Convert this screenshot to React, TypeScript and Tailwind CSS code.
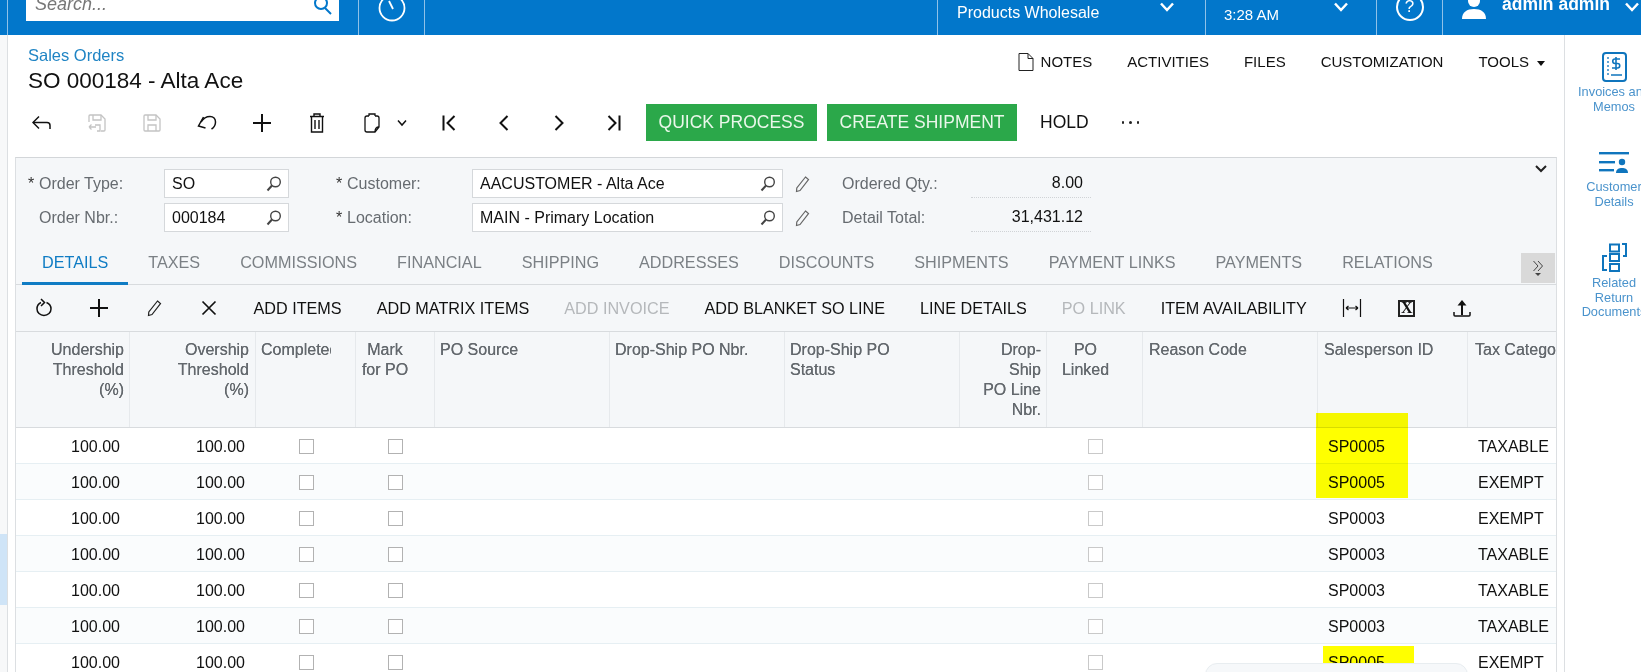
import type { ReactNode } from "react";

// small helper for the line icons
function Ico({ w = 20, h = 20, className = "", sw = 1.5, children }: { w?: number; h?: number; className?: string; sw?: number; children: ReactNode }) {
  return (
    <svg width={w} height={h} viewBox={`0 0 ${w} ${h}`} fill="none" stroke="currentColor" strokeWidth={sw} className={className}>
      {children}
    </svg>
  );
}

const Chevron = ({ className = "" }: { className?: string }) => (
  <Ico w={16} h={10} sw={2.5} className={className}>
    <path d="M2 1.5l6 6.5 6-6.5" />
  </Ico>
);

const Lens = () => (
  <Ico w={18} h={18} sw={1.4} className="text-[#444]">
    <circle cx="10.5" cy="7" r="4.8" />
    <path d="M7 10.5L2.5 15.5" strokeWidth={2} />
  </Ico>
);

const Pencil = ({ className = "" }: { className?: string }) => (
  <Ico w={18} h={18} sw={1.2} className={className}>
    <path d="M12.5 2l3 2.5L7 15.5l-3.5 1 .3-3.6z" />
  </Ico>
);

const IconBtn = ({ children, className = "" }: { children: ReactNode; className?: string }) => (
  <div className={`flex h-full w-[55px] shrink-0 items-center justify-center ${className}`}>{children}</div>
);

const Floppy = ({ arrow }: { arrow?: boolean }) => (
  <Ico w={18} h={18} sw={1.3} className="text-[#c4c4c4]">
    {arrow ? (
      <>
        <path d="M1 8V2a1 1 0 0 1 1-1h11l4 4v11a1 1 0 0 1-1 1h-3" />
        <path d="M5 1v5h8V1M9 17h3v-6H7" />
        <path d="M1 13h7M1 13l2.5-2.5M1 13l2.5 2.5" />
      </>
    ) : (
      <>
        <path d="M2 1h11l4 4v11a1 1 0 0 1-1 1H2a1 1 0 0 1-1-1V2a1 1 0 0 1 1-1z" />
        <path d="M5 1v5h8V1M5 17v-6h8v6" />
      </>
    )}
  </Ico>
);

function PageToolbar() {
  return (
    <div className="flex h-[37px] items-center pl-[6.5px] text-[#111]">
      <IconBtn>
        <Ico w={20} h={16}>
          <path d="M1 7.5h14a3 3 0 0 1 3 3V14" />
          <path d="M7 1.5l-6 6 6 6" />
        </Ico>
      </IconBtn>
      <IconBtn><Floppy arrow /></IconBtn>
      <IconBtn><Floppy /></IconBtn>
      <IconBtn>
        <Ico w={20} h={16}>
          <path d="M6.5 2L1.5 11l7 2" />
          <path d="M4 7C6.5 3 10 1.5 13 1.5c3.5 0 5.5 2.5 5.5 5.5 0 3-1.5 5.5-4 7" />
        </Ico>
      </IconBtn>
      <IconBtn>
        <Ico sw={2}>
          <path d="M10 1v18M1 10h18" />
        </Ico>
      </IconBtn>
      <IconBtn>
        <Ico w={16} h={20} sw={1.4}>
          <path d="M1 3.5h14M5 3V1h6v2M2.5 4v15h11V4M6 7v9M10 7v9" />
        </Ico>
      </IconBtn>
      <div className="flex h-full w-[77px] shrink-0 items-center pl-[19px]">
        <Ico w={16} h={20} sw={1.3}>
          <path d="M5 3H3a2 2 0 0 0-2 2v12a2 2 0 0 0 2 2h8l4-5V5a2 2 0 0 0-2-2h-2" />
          <path d="M5 3V1h6v2M11 19c0-3 1-5 4-5" />
        </Ico>
        <Ico w={12} h={8} sw={1.5} className="ml-[16px]">
          <path d="M2 1.5l4 4.5 4-4.5" />
        </Ico>
      </div>
      <IconBtn>
        <Ico w={14} h={16} sw={2}>
          <path d="M1.5 .5v15M12.5 1L5.5 8l7 7" />
        </Ico>
      </IconBtn>
      <IconBtn>
        <Ico w={10} h={16} sw={2}>
          <path d="M8.5 1L1.5 8l7 7" />
        </Ico>
      </IconBtn>
      <IconBtn>
        <Ico w={10} h={16} sw={2}>
          <path d="M1.5 1l7 7-7 7" />
        </Ico>
      </IconBtn>
      <IconBtn>
        <Ico w={14} h={16} sw={2}>
          <path d="M12.5 .5v15M1.5 1l7 7-7 7" />
        </Ico>
      </IconBtn>
      <button className="ml-[4.5px] flex h-[37px] w-[171px] items-center justify-center bg-[#2ba84a] text-[17.5px] text-[#eaf7ea]">QUICK PROCESS</button>
      <button className="ml-[10px] flex h-[37px] w-[190px] items-center justify-center bg-[#2ba84a] text-[17.5px] text-[#eaf7ea]">CREATE SHIPMENT</button>
      <span className="ml-[23px] text-[17.5px] text-[#111]">HOLD</span>
      <span className="ml-[33px] flex gap-[5px]">
        <i className="size-[2.5px] rounded-full bg-[#222]" />
        <i className="size-[2.5px] rounded-full bg-[#222]" />
        <i className="size-[2.5px] rounded-full bg-[#222]" />
      </span>
    </div>
  );
}

function TopBar() {
  const cell = "h-full border-l border-[#8fc1e8] shrink-0";
  return (
    <div className="flex h-[35px] overflow-hidden bg-[#0277cb] pl-[7px] text-white">
      <div className={`${cell} w-[351px] pl-[18px]`}>
        <div className="flex h-[21px] w-[313px] items-end justify-between overflow-hidden bg-white pl-[9px] pr-[6px]">
          <span className="mb-[7px] text-[18px] leading-[20px] italic text-[#777]">Search...</span>
          <Ico w={20} h={20} sw={2} className="mb-[2px] text-[#0277cb]">
            <circle cx="8" cy="4" r="6" />
            <path d="M12 9l6 6" />
          </Ico>
        </div>
      </div>
      <div className={`${cell} flex w-[66px] justify-center`}>
        <Ico w={28} h={28} sw={1.8} className="-mt-[6px]">
          <circle cx="14" cy="14" r="12.5" />
          <path d="M11 7l4 8" />
        </Ico>
      </div>
      <div className={`${cell} w-[513px]`} />
      <div className={`${cell} flex w-[268px] pl-[19px]`}>
        <span className="mt-[3px] text-[16px] leading-[20px]">Products Wholesale</span>
        <Chevron className="ml-[60px] mt-[2px]" />
      </div>
      <div className={`${cell} flex w-[171px] pl-[18px]`}>
        <span className="mt-[5px] text-[15px] leading-[20px]">3:28 AM</span>
        <Chevron className="ml-[54px] mt-[2px]" />
      </div>
      <div className={`${cell} flex w-[66px] justify-center`}>
        <div className="-mt-[7px] flex size-[28px] items-center justify-center rounded-full border-2 border-white text-[17px]">?</div>
      </div>
      <div className={`${cell} flex flex-1 pl-[18px]`}>
        <svg width="26" height="26" viewBox="0 0 26 26" fill="white" className="-mt-[6px]">
          <circle cx="13" cy="7" r="6" />
          <path d="M1 25c0-7 5-10 12-10s12 3 12 10z" />
        </svg>
        <span className="-mt-[6px] ml-[15px] shrink-0 text-[17.5px] leading-[20px] font-bold">admin admin</span>
        <Chevron className="ml-[14px] mt-[2px] shrink-0" />
      </div>
    </div>
  );
}

function TitleRow() {
  const cmd = "text-[15px] leading-[20px] text-[#111]";
  return (
    <div className="flex h-[69px] justify-between pl-[20px] pr-[19px]">
      <div className="pt-[10px]">
        <div className="text-[16.5px] leading-[20px] text-[#1f84c4]">Sales Orders</div>
        <div className="mt-px text-[22.5px] leading-[30px] text-[#111]">SO 000184 - Alta Ace</div>
      </div>
      <div className="flex h-[37px] items-end gap-[35px]">
        <span className="flex items-center gap-[7px]">
          <Ico w={16} h={18} sw={1} className="text-[#222]">
            <path d="M1 .5h9l5 5v12H1zM10 .5v5h5" />
          </Ico>
          <span className={cmd}>NOTES</span>
        </span>
        <span className={cmd}>ACTIVITIES</span>
        <span className={cmd}>FILES</span>
        <span className={cmd}>CUSTOMIZATION</span>
        <span className="flex items-center gap-[8px]">
          <span className={cmd}>TOOLS</span>
          <i className="mt-[2px] size-0 border-x-[4.5px] border-t-[5px] border-x-transparent border-t-[#111]" />
        </span>
      </div>
    </div>
  );
}

function Field({ value, w }: { value: string; w: string }) {
  return (
    <div className={`flex h-[29px] items-center justify-between border border-[#d5d8db] bg-white pl-[7px] pr-[5px] text-[#111] ${w}`}>
      <span>{value}</span>
      <Lens />
    </div>
  );
}

function FormRow({ star1, l1, v1, l2, v2, l3, v3 }: { star1: boolean; l1: string; v1: string; l2: string; v2: string; l3: string; v3: string }) {
  return (
    <div className="flex h-[29px] items-center text-[16px] text-[#666b70]">
      <span className="w-[12px] pl-px text-[#333]">{star1 ? "*" : ""}</span>
      <span className="w-[125px]">{l1}</span>
      <Field value={v1} w="w-[125px]" />
      <span className="ml-[46px] w-[12px] pl-px text-[#333]">*</span>
      <span className="w-[125px]">{l2}</span>
      <Field value={v2} w="w-[311px]" />
      <span className="flex w-[38px] justify-center text-[#666]"><Pencil /></span>
      <span className="ml-[21px] w-[129px]">{l3}</span>
      <span className="w-[120px] border-b border-dotted border-[#d0d3d6] pr-[8px] text-right leading-[28px] text-[#111]">{v3}</span>
    </div>
  );
}

const tabs = ["DETAILS", "TAXES", "COMMISSIONS", "FINANCIAL", "SHIPPING", "ADDRESSES", "DISCOUNTS", "SHIPMENTS", "PAYMENT LINKS", "PAYMENTS", "RELATIONS"];

function Tabs() {
  return (
    <div className="mt-[8px] flex h-[45px] border-b border-[#d8dbde] pl-[6px] text-[16.2px] text-[#7b8085]">
      {tabs.map((t, i) => (
        <div key={t} className={`-mb-px flex items-center px-[20px] ${i === 0 ? "border-b-[3px] border-[#0f7cc4] pt-[3px] text-[#0f7cc4]" : ""}`}>{t}</div>
      ))}
      <div className="ml-auto mr-px mt-[13px] flex h-[30px] w-[34px] flex-col items-center justify-center bg-[#d9d9d9] text-[#444]">
        <Ico w={12} h={12} sw={1}>
          <path d="M1.5 1l4.5 5-4.5 5M6 1l4.5 5L6 11" />
        </Ico>
        <i className="mt-[1px] size-0 border-x-[3px] border-t-[3px] border-x-transparent border-t-[#444]" />
      </div>
    </div>
  );
}

function GridToolbar() {
  const b = "shrink-0 px-[17.5px] text-[16.2px] text-[#111]";
  const off = "shrink-0 px-[17.5px] text-[16.2px] text-[#b5b8bb]";
  return (
    <div className="flex h-[46px] items-center text-[#111]">
      <IconBtn>
        <Ico>
          <path d="M7 4.5C3.5 6 3 9 3 11c0 3.5 3 6.5 7 6.5s7-3 7-6.5c0-3-2-5.5-4.5-6.5" />
          <path d="M7 1l3.5 3.5L7 8" />
        </Ico>
      </IconBtn>
      <IconBtn>
        <Ico sw={2}>
          <path d="M10 1v18M1 10h18" />
        </Ico>
      </IconBtn>
      <IconBtn><Pencil className="text-[#222]" /></IconBtn>
      <IconBtn>
        <Ico w={16} h={16} sw={1.7}>
          <path d="M1.5 1.5l13 13M14.5 1.5l-13 13" />
        </Ico>
      </IconBtn>
      <span className={b}>ADD ITEMS</span>
      <span className={b}>ADD MATRIX ITEMS</span>
      <span className={off}>ADD INVOICE</span>
      <span className={b}>ADD BLANKET SO LINE</span>
      <span className={b}>LINE DETAILS</span>
      <span className={off}>PO LINK</span>
      <span className={b}>ITEM AVAILABILITY</span>
      <IconBtn>
        <Ico w={20} h={18} sw={1.2}>
          <path d="M1.5 0v18M18.5 0v18M4 9h12M4 9l2.5-2M4 9l2.5 2M16 9l-2.5-2M16 9l-2.5 2" />
        </Ico>
      </IconBtn>
      <IconBtn>
        <div className="flex size-[17px] items-center justify-center border-2 border-[#222] font-['Liberation_Serif',serif] text-[16px] leading-none font-bold">X</div>
      </IconBtn>
      <IconBtn>
        <Ico w={18} h={18} sw={1.5}>
          <path d="M9 16V6" strokeWidth={2} />
          <path d="M9 1l4.5 5.5h-9z" fill="currentColor" stroke="none" />
          <path d="M1 13v3a1 1 0 0 0 1 1h14a1 1 0 0 0 1-1v-3" />
        </Ico>
      </IconBtn>
    </div>
  );
}

const cols = "grid grid-cols-[114px_126px_100px_79px_175px_175px_175px_87px_96px_175px_150px_120px]";
const hcell = "h-full border-r border-[#e6e9ec] pt-[8px] overflow-hidden text-[16px] leading-[20px] text-[#63686d] [text-shadow:0_0_0.6px_#63686d]";

function GridHeader() {
  return (
    <div className={`${cols} h-[97px] border-y border-[#d8dbde] bg-[#f5f7f9]`}>
      <div className={`${hcell} pr-[5px] text-right`}>Undership<br />Threshold<br />(%)</div>
      <div className={`${hcell} pr-[6px] text-right`}>Overship<br />Threshold<br />(%)</div>
      <div className={hcell + " pl-[5px]"}><div className="w-[70px] overflow-hidden">Completed</div></div>
      <div className={hcell}><div className="w-[58px] text-center">Mark<br />for PO</div></div>
      <div className={hcell + " pl-[5px]"}>PO Source</div>
      <div className={hcell + " pl-[5px]"}>Drop-Ship PO Nbr.</div>
      <div className={hcell + " pl-[5px]"}>Drop-Ship PO<br />Status</div>
      <div className={`${hcell} pr-[5px] text-right`}>Drop-<br />Ship<br />PO Line<br />Nbr.</div>
      <div className={hcell}><div className="w-[77px] text-center">PO<br />Linked</div></div>
      <div className={hcell + " pl-[6px]"}>Reason Code</div>
      <div className={hcell + " pl-[6px]"}>Salesperson ID</div>
      <div className={hcell + " border-r-0 pl-[7px]"}>Tax Category</div>
    </div>
  );
}

const Check = ({ light }: { light?: boolean }) => (
  <i className={`block size-[15px] border bg-white ${light ? "border-[#c9c9c9]" : "border-[#b2b2b2]"}`} />
);

const rows = [
  ["SP0005", "TAXABLE"],
  ["SP0005", "EXEMPT"],
  ["SP0003", "EXEMPT"],
  ["SP0003", "TAXABLE"],
  ["SP0003", "TAXABLE"],
  ["SP0003", "TAXABLE"],
  ["SP0005", "EXEMPT"],
];

function GridRows() {
  return (
    <div>
      {rows.map(([sp, tax], i) => (
        <div key={i} className={`${cols} h-[36px] items-center border-b border-[#e6eff3] pt-[2px] text-[16px] text-[#111] ${i % 2 ? "bg-[#fafcfd]" : "bg-white"}`}>
          <span className="pr-[10px] text-right">100.00</span>
          <span className="pr-[11px] text-right">100.00</span>
          <span className="flex justify-center"><Check /></span>
          <span className="flex justify-center"><Check /></span>
          <span />
          <span />
          <span />
          <span />
          <span className="flex justify-center"><Check light /></span>
          <span />
          <span className="pl-[10px]">{sp}</span>
          <span className="pl-[10px]">{tax}</span>
        </div>
      ))}
    </div>
  );
}

function SideLink({ lines, icon, h, gap }: { lines: string[]; icon: ReactNode; h: string; gap: string }) {
  return (
    <div className={`flex flex-col items-center ${h}`}>
      {icon}
      <div className={`text-center text-[12.8px] leading-[14.5px] whitespace-nowrap text-[#4a93cc] ${gap}`}>
        {lines.map((l) => (
          <div key={l}>{l}</div>
        ))}
      </div>
    </div>
  );
}

function SidePanel() {
  return (
    <div className="w-[77px] shrink-0 overflow-hidden border-l border-[#dcdfe2] pt-[17px] text-[#0f75bd]">
      <div className="w-[98px]">
        <SideLink
          h="h-[100px]"
          gap="mt-[3px]"
          lines={["Invoices and", "Memos"]}
          icon={
            <Ico w={25} h={30} sw={2}>
              <rect x="1" y="1" width="23" height="28" rx="3" />
              <path d="M6 5v20" strokeDasharray="2 2" strokeWidth={1.3} />
              <path d="M18 7h-5a2 2 0 0 0 0 4.5h2.5a2 2 0 0 1 0 4.5H10M14 5v13M9 23h11" strokeWidth={1.6} />
            </Ico>
          }
        />
        <SideLink
          h="h-[91px]"
          gap="mt-[7px]"
          lines={["Customer", "Details"]}
          icon={
            <svg width="30" height="21" viewBox="0 0 30 21" fill="currentColor">
              <rect y="0" width="30" height="2.4" />
              <rect y="9" width="16" height="2.4" />
              <rect y="17" width="15" height="2.4" />
              <circle cx="23" cy="10" r="3.2" />
              <path d="M17 21c0-4 3-5 6-5s6 1 6 5z" />
            </svg>
          }
        />
        <SideLink
          h="h-[90px]"
          gap="mt-[3px]"
          lines={["Related", "Return", "Documents"]}
          icon={
            <Ico w={27} h={30} sw={2}>
              <rect x="9" y="1.5" width="9" height="7" />
              <rect x="9" y="11" width="9" height="7" />
              <rect x="9" y="21" width="9" height="7" />
              <path d="M21 1h4v12h-3M6 13H2v14h4" />
            </Ico>
          }
        />
      </div>
    </div>
  );
}

export default function App() {
  return (
    <div className="h-[672px] w-[1641px] overflow-hidden bg-white font-['Liberation_Sans',Arial,sans-serif]">
      <TopBar />
      <div className="flex h-[637px]">
        <div className="w-[8px] shrink-0 border-r border-[#dcdfe2] bg-[#f7f8f9] pt-[499px]">
          <div className="h-[71px] bg-[#cfe4f7]" />
        </div>
        <div className="min-w-0 flex-1">
          <TitleRow />
          <PageToolbar />
          <div className="relative mr-[7px] ml-[7px] mt-[16px] h-[600px] overflow-hidden border-x border-t border-x-[#dcdfe2] border-t-[#d3d6d9] bg-[#f5f7f9] pt-[11px]">
            <div className="absolute right-[8px] top-[6px] text-[#222]">
              <Ico w={14} h={10} sw={2}>
                <path d="M2 2l5 5 5-5" />
              </Ico>
            </div>
            <div className="flex flex-col gap-[5px] pl-[11px]">
              <FormRow star1 l1="Order Type:" v1="SO" l2="Customer:" v2="AACUSTOMER - Alta Ace" l3="Ordered Qty.:" v3="8.00" />
              <FormRow star1={false} l1="Order Nbr.:" v1="000184" l2="Location:" v2="MAIN - Primary Location" l3="Detail Total:" v3="31,431.12" />
            </div>
            <Tabs />
            <GridToolbar />
            <div className="relative overflow-hidden">
              <GridHeader />
              <GridRows />
              <div className="absolute left-[1300px] top-[82px] h-[85px] w-[92px] bg-[#ffff00] mix-blend-multiply" />
              <div className="absolute left-[1307px] top-[315px] h-[30px] w-[91px] bg-[#ffff00] mix-blend-multiply" />
              <div className="absolute left-[1189px] top-[332px] h-[40px] w-[263px] rounded-t-[12px] border border-[#e8edf0] bg-[#f6f8fa]" />
            </div>
          </div>
        </div>
        <SidePanel />
      </div>
    </div>
  );
}
